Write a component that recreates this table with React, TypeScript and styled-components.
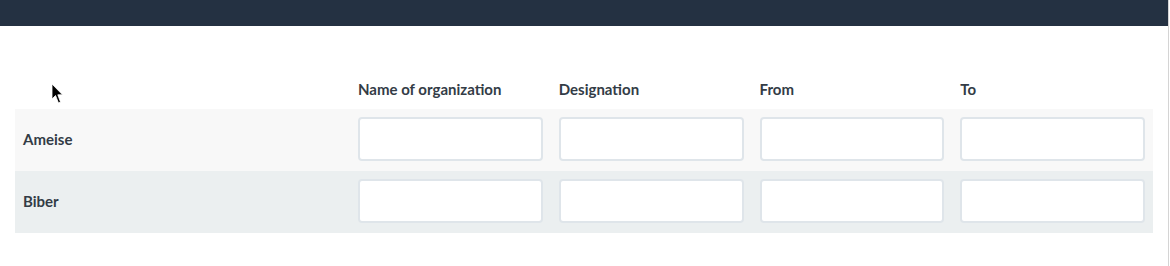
import React from "react";
import styled, { createGlobalStyle } from "styled-components";

const Global = createGlobalStyle`
  html, body { margin: 0; padding: 0; background: #fff; }
  body { font-family: Lato, "Open Sans", sans-serif; }
`;

const Page = styled.div`
  position: relative;
  width: 1168px;
  height: 266px;
  border-right: 1px solid #d4d4d4;
  box-sizing: content-box;
`;

const TopBar = styled.div`
  height: 26px;
  background: #243142;
`;

const Content = styled.div`
  padding: 43px 15px 0 15px;
`;

const Table = styled.table`
  width: 1138px;
  border-collapse: collapse;
  table-layout: fixed;
`;

const HeadCell = styled.th`
  height: 39px;
  padding: 0 8px 1px;
  text-align: left;
  vertical-align: middle;
  font-size: 15px;
  font-weight: 700;
  color: #333c46;
  white-space: nowrap;
`;

const Row = styled.tr<{ $alt?: boolean }>`
  background: ${(p) => (p.$alt ? "#ebeff0" : "#f8f8f8")};
`;

const LabelCell = styled.td`
  padding: 8px 8px 10px;
  font-size: 15px;
  font-weight: 700;
  color: #333c46;
  vertical-align: middle;
`;

const InputCell = styled.td`
  padding: 8px 8px 10px;
`;

const Field = styled.input`
  display: block;
  box-sizing: border-box;
  width: 100%;
  height: 44px;
  border: 2px solid #dfe5ea;
  border-radius: 4px;
  background: #fff;
  outline: none;
`;

const Cursor = styled.svg`
  position: absolute;
  left: 51px;
  top: 83px;
`;

const columns = ["Name of organization", "Designation", "From", "To"];
const rows = ["Ameise", "Biber"];

export default function App() {
  return (
    <>
      <Global />
      <Page>
        <TopBar />
        <Content>
          <Table>
            <colgroup>
              <col style={{ width: 335 }} />
              {columns.map((c) => (
                <col key={c} />
              ))}
            </colgroup>
            <thead>
              <tr>
                <HeadCell />
                {columns.map((c) => (
                  <HeadCell key={c}>{c}</HeadCell>
                ))}
              </tr>
            </thead>
            <tbody>
              {rows.map((r, i) => (
                <Row key={r} $alt={i % 2 === 1}>
                  <LabelCell>{r}</LabelCell>
                  {columns.map((c) => (
                    <InputCell key={c}>
                      <Field type="text" />
                    </InputCell>
                  ))}
                </Row>
              ))}
            </tbody>
          </Table>
        </Content>
        <Cursor width="13" height="21" viewBox="0 0 13 21">
          <path d="M1 1 L1 16 L4.5 12.5 L7.5 20 L9.5 19 L6.8 11.8 L11.5 11.8 Z" fill="#000" stroke="#fff" strokeWidth="0.8" />
        </Cursor>
      </Page>
    </>
  );
}
